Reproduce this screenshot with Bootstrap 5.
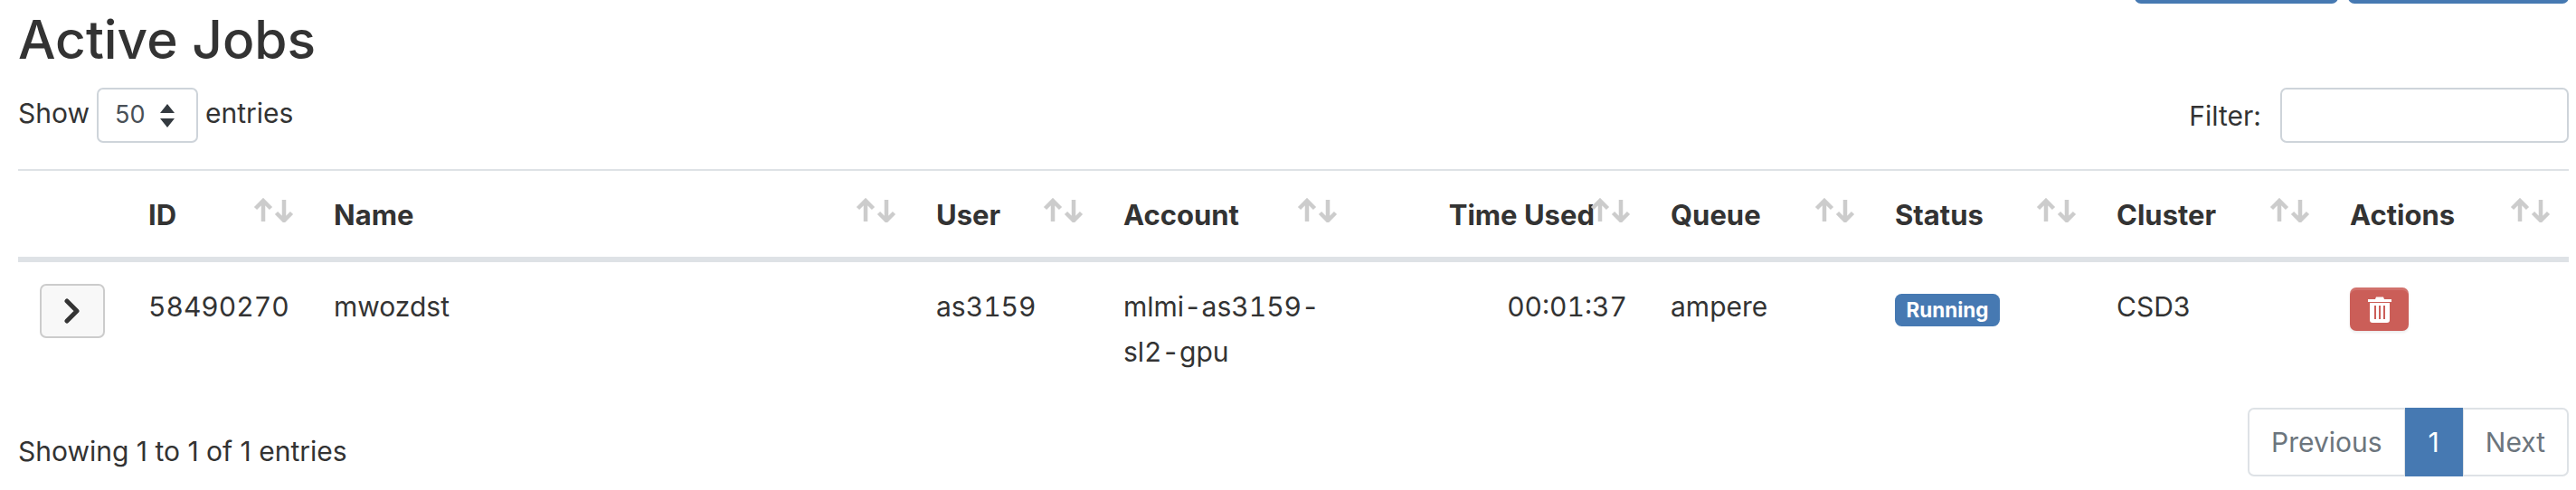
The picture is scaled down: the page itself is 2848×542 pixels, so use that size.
<!DOCTYPE html>
<html lang="en">

<head>
  <meta charset="UTF-8">
  <meta name="viewport" content="width=device-width, initial-scale=1.0">
  <title>Active Jobs</title>
  <link href="https://cdn.jsdelivr.net/npm/bootstrap@5.3.0/dist/css/bootstrap.min.css" rel="stylesheet">
  <style>
    body {
      font-family: Inter, "Liberation Sans", sans-serif;
      font-size: 30px;
      line-height: 50px;
      color: #333;
      background: #fff;
    }
    .page-wrap {
      padding: 0 8px 0 20px;
    }
    .top-actions {
      height: 4px;
      overflow: hidden;
      gap: 11px;
    }
    .top-btn {
      height: 60px;
      flex: none;
      background: #4679b2;
      border: 0;
      border-radius: 7px;
    }
    .top-btn-a { width: 225px; }
    .top-btn-b { width: 244px; }
    .job-title {
      font-size: 58.600px;
      font-weight: 500;
      line-height: 76px;
      margin: 2px 0 15px;
      color: #333;
    }
    .controls-row {
      height: 61px;
      margin-bottom: 29px;
    }
    .show-label {
      margin-top: -5px;
    }
    .len-select {
      width: 112px;
      height: 61px;
      margin: 5px 8px 0 8px;
      padding: 0 18px;
      font-size: 27px;
      color: #495057;
      border: 2px solid #ced4da;
      border-radius: 7px;
      background-size: 16px 28px;
      background-position: right 24px center;
      background-image: url("data:image/svg+xml,%3Csvg xmlns='http://www.w3.org/2000/svg' viewBox='0 0 16 28'%3E%3Cpath fill='%23343a40' d='M8 1l8 10H0zM8 27L0 17h16z'/%3E%3C/svg%3E");
    }
    .filter-input {
      width: 319px;
      height: 61px;
      margin-left: 21px;
      border: 2px solid #ced4da;
      border-radius: 7px;
    }
    .jobs-table {
      table-layout: fixed;
      width: 2820px;
      margin-bottom: 13px;
      color: #333;
      border-top: 2px solid #dee2e6;
    }
    .jobs-table > thead > tr > th {
      position: relative;
      height: 95px;
      padding: 24px 60px 21px 24px;
      font-size: 31px;
      border-bottom: 6px solid #dee2e6;
      white-space: nowrap;
      vertical-align: middle;
    }
    .jobs-table > tbody > tr > td {
      padding: 24px;
      border: 0;
      line-height: 50px;
      font-variant-numeric: tabular-nums;
    }
    .w-exp { width: 120px; }
    .w-id { width: 205px; }
    .w-name { width: 666px; }
    .w-user { width: 207px; }
    .w-account { width: 281px; }
    .w-time { width: 324px; }
    .w-queue { width: 248px; }
    .w-status { width: 245px; }
    .w-cluster { width: 258px; }
    .w-actions { width: 266px; }
    .sort-arrows {
      position: absolute;
      top: 30px;
      right: 19px;
      width: 46px;
      height: 27px;
    }
    .expand-btn {
      width: 72px;
      height: 60px;
      padding: 0;
      background: #f8f8f8;
      border: 2px solid #ccc;
      border-radius: 7px;
    }
    .job-status {
      width: 116px;
      height: 36px;
      padding: 0;
      font-size: 22.500px;
      line-height: 36px;
      border-radius: 7.500px;
      background: #4679b2;
      vertical-align: -1px;
    }
    .delete-btn {
      width: 65px;
      height: 48px;
      margin-top: 4px;
      padding: 0;
      background: #cb5e58;
      border: 0;
      border-radius: 7px;
      box-shadow: inset 0 3px 0 rgba(255, 255, 255, .12), 0 2px 3px rgba(0, 0, 0, .08);
    }
    .footer-row {
      height: 76px;
    }
    .footer-info {
      padding-top: 23px;
    }
    .jobs-pager {
      --bs-pagination-padding-x: 24px;
      --bs-pagination-padding-y: 11px;
      --bs-pagination-font-size: 30px;
      --bs-pagination-color: #6c757d;
      --bs-pagination-border-width: 2px;
      --bs-pagination-border-color: #dee2e6;
      --bs-pagination-border-radius: 7px;
      --bs-pagination-active-bg: #4679b2;
      --bs-pagination-active-border-color: #4679b2;
      --bs-pagination-active-color: #fff;
    }
    .jobs-pager .page-link {
      line-height: 50px;
    }
  </style>
</head>

<body>
  <div class="page-wrap">
    <div class="top-actions d-flex justify-content-end align-items-end">
      <button class="top-btn top-btn-a" type="button"></button>
      <button class="top-btn top-btn-b" type="button"></button>
    </div>

    <h1 class="job-title">Active Jobs</h1>

    <div class="controls-row d-flex justify-content-between align-items-center">
      <label class="show-label d-flex align-items-center">Show
        <select class="form-select len-select">
          <option>50</option>
        </select>
        entries</label>
      <label class="d-flex align-items-center">Filter:
        <input class="form-control filter-input" type="search">
      </label>
    </div>

    <table class="table jobs-table">
      <colgroup>
        <col class="w-exp">
        <col class="w-id">
        <col class="w-name">
        <col class="w-user">
        <col class="w-account">
        <col class="w-time">
        <col class="w-queue">
        <col class="w-status">
        <col class="w-cluster">
        <col class="w-actions">
      </colgroup>
      <thead>
        <tr>
          <th></th>
          <th>ID <svg class="sort-arrows" viewBox="0 0 46 27"><use href="#sort-icon"></use></svg></th>
          <th>Name <svg class="sort-arrows" viewBox="0 0 46 27"><use href="#sort-icon"></use></svg></th>
          <th>User <svg class="sort-arrows" viewBox="0 0 46 27"><use href="#sort-icon"></use></svg></th>
          <th>Account <svg class="sort-arrows" viewBox="0 0 46 27"><use href="#sort-icon"></use></svg></th>
          <th class="text-end">Time Used <svg class="sort-arrows" viewBox="0 0 46 27"><use href="#sort-icon"></use></svg></th>
          <th>Queue <svg class="sort-arrows" viewBox="0 0 46 27"><use href="#sort-icon"></use></svg></th>
          <th>Status <svg class="sort-arrows" viewBox="0 0 46 27"><use href="#sort-icon"></use></svg></th>
          <th>Cluster <svg class="sort-arrows" viewBox="0 0 46 27"><use href="#sort-icon"></use></svg></th>
          <th>Actions <svg class="sort-arrows" viewBox="0 0 46 27"><use href="#sort-icon"></use></svg></th>
        </tr>
      </thead>
      <tbody>
        <tr>
          <td>
            <button class="btn expand-btn d-flex align-items-center justify-content-center" type="button">
              <svg width="20" height="28" viewBox="0 0 20 28"><path d="M4 3l11 11L4 25" fill="none" stroke="#343434" stroke-width="5" stroke-linecap="round" stroke-linejoin="round"/></svg>
            </button>
          </td>
          <td>58490270</td>
          <td>mwozdst</td>
          <td>as3159</td>
          <td>mlmi-as3159-sl2-gpu</td>
          <td class="text-end">00:01:37</td>
          <td>ampere</td>
          <td><span class="badge job-status">Running</span></td>
          <td>CSD3</td>
          <td>
            <button class="btn delete-btn d-flex align-items-center justify-content-center" type="button">
              <svg width="26" height="29" viewBox="0 0 26 29"><path fill="#fff" fill-rule="evenodd" d="M0 3h8l1-2.500h8l1 2.500h8v3H0zM2 7h22v19a3 3 0 0 1-3 3H5a3 3 0 0 1-3-3zM7 10v15h2V10zM12 10v15h2V10zM17 10v15h2V10z"/></svg>
            </button>
          </td>
        </tr>
      </tbody>
    </table>

    <div class="footer-row d-flex justify-content-between align-items-start">
      <div class="footer-info">Showing 1 to 1 of 1 entries</div>
      <ul class="pagination jobs-pager mb-0">
        <li class="page-item"><a class="page-link" href="#">Previous</a></li>
        <li class="page-item active"><a class="page-link" href="#">1</a></li>
        <li class="page-item"><a class="page-link" href="#">Next</a></li>
      </ul>
    </div>
  </div>

  <svg class="d-none">
    <symbol id="sort-icon" viewBox="0 0 46 27">
      <path d="M11 26V3M2.500 11.500L11 3l8.500 8.500M34 2v23M25.500 16.500L34 25l8.500-8.500" fill="none" stroke="#ccc" stroke-width="4.500"/>
    </symbol>
  </svg>

  <script src="https://cdn.jsdelivr.net/npm/bootstrap@5.3.0/dist/js/bootstrap.bundle.min.js"></script>
</body>

</html>
